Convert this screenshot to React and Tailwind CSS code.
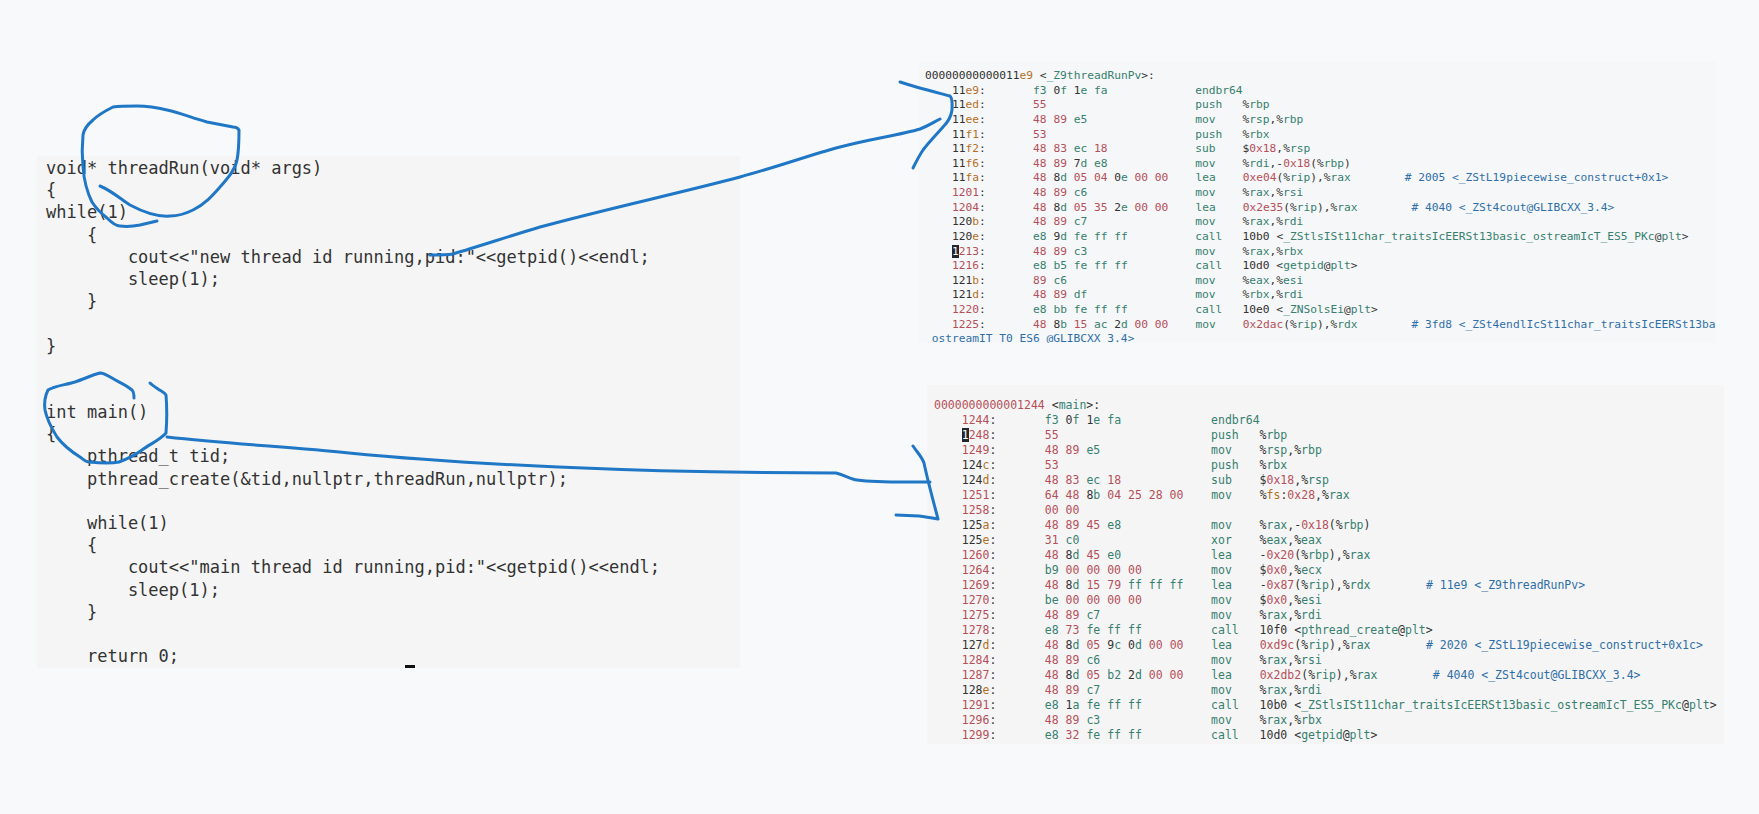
import React from 'react'

const RED = 'text-[#b5505a]'
const GREEN = 'text-[#35806f]'
const DARK = 'text-[#333333]'
const ORANGE = 'text-[#b5701f]'
const BLUE = 'text-[#2f6fa8]'

const sourceLines = [
    'void* threadRun(void* args)',
    '{',
    'while(1)',
    '    {',
    '        cout<<"new thread id running,pid:"<<getpid()<<endl;',
    '        sleep(1);',
    '    }',
    '',
    '}',
    '',
    '',
    'int main()',
    '{',
    '    pthread_t tid;',
    '    pthread_create(&tid,nullptr,threadRun,nullptr);',
    '',
    '    while(1)',
    '    {',
    '        cout<<"main thread id running,pid:"<<getpid()<<endl;',
    '        sleep(1);',
    '    }',
    '',
    '    return 0;',
]

const threadRunLines = [
    ['11e9', 'f3 0f 1e fa', 'endbr64'],
    ['11ed', '55', 'push', '%rbp'],
    ['11ee', '48 89 e5', 'mov', '%rsp,%rbp'],
    ['11f1', '53', 'push', '%rbx'],
    ['11f2', '48 83 ec 18', 'sub', '$0x18,%rsp'],
    ['11f6', '48 89 7d e8', 'mov', '%rdi,-0x18(%rbp)'],
    ['11fa', '48 8d 05 04 0e 00 00', 'lea', '0xe04(%rip),%rax', '# 2005 <_ZStL19piecewise_construct+0x1>'],
    ['1201', '48 89 c6', 'mov', '%rax,%rsi'],
    ['1204', '48 8d 05 35 2e 00 00', 'lea', '0x2e35(%rip),%rax', '# 4040 <_ZSt4cout@GLIBCXX_3.4>'],
    ['120b', '48 89 c7', 'mov', '%rax,%rdi'],
    ['120e', 'e8 9d fe ff ff', 'call', '10b0 <_ZStlsISt11char_traitsIcEERSt13basic_ostreamIcT_ES5_PKc@plt>'],
    ['1213', '48 89 c3', 'mov', '%rax,%rbx', null, true],
    ['1216', 'e8 b5 fe ff ff', 'call', '10d0 <getpid@plt>'],
    ['121b', '89 c6', 'mov', '%eax,%esi'],
    ['121d', '48 89 df', 'mov', '%rbx,%rdi'],
    ['1220', 'e8 bb fe ff ff', 'call', '10e0 <_ZNSolsEi@plt>'],
    ['1225', '48 8b 15 ac 2d 00 00', 'mov', '0x2dac(%rip),%rdx', '# 3fd8 <_ZSt4endlIcSt11char_traitsIcEERSt13basic_'],
]

const mainLines = [
    ['1244', 'f3 0f 1e fa', 'endbr64'],
    ['1248', '55', 'push', '%rbp', null, true],
    ['1249', '48 89 e5', 'mov', '%rsp,%rbp'],
    ['124c', '53', 'push', '%rbx'],
    ['124d', '48 83 ec 18', 'sub', '$0x18,%rsp'],
    ['1251', '64 48 8b 04 25 28 00', 'mov', '%fs:0x28,%rax'],
    ['1258', '00 00'],
    ['125a', '48 89 45 e8', 'mov', '%rax,-0x18(%rbp)'],
    ['125e', '31 c0', 'xor', '%eax,%eax'],
    ['1260', '48 8d 45 e0', 'lea', '-0x20(%rbp),%rax'],
    ['1264', 'b9 00 00 00 00', 'mov', '$0x0,%ecx'],
    ['1269', '48 8d 15 79 ff ff ff', 'lea', '-0x87(%rip),%rdx', '# 11e9 <_Z9threadRunPv>'],
    ['1270', 'be 00 00 00 00', 'mov', '$0x0,%esi'],
    ['1275', '48 89 c7', 'mov', '%rax,%rdi'],
    ['1278', 'e8 73 fe ff ff', 'call', '10f0 <pthread_create@plt>'],
    ['127d', '48 8d 05 9c 0d 00 00', 'lea', '0xd9c(%rip),%rax', '# 2020 <_ZStL19piecewise_construct+0x1c>'],
    ['1284', '48 89 c6', 'mov', '%rax,%rsi'],
    ['1287', '48 8d 05 b2 2d 00 00', 'lea', '0x2db2(%rip),%rax', '# 4040 <_ZSt4cout@GLIBCXX_3.4>'],
    ['128e', '48 89 c7', 'mov', '%rax,%rdi'],
    ['1291', 'e8 1a fe ff ff', 'call', '10b0 <_ZStlsISt11char_traitsIcEERSt13basic_ostreamIcT_ES5_PKc@plt>'],
    ['1296', '48 89 c3', 'mov', '%rax,%rbx'],
    ['1299', 'e8 32 fe ff ff', 'call', '10d0 <getpid@plt>'],
]

// address: plain digits are red, otherwise digits dark and the hex tail orange
const Address = ({value, cursor}) => {
    if (/^\d+$/.test(value)) {
        if (cursor) {
            return (
                <>
                    <span className="bg-[#23262d] text-white">{value[0]}</span>
                    <span className={RED}>{value.slice(1)}</span>
                </>
            )
        }
        return <span className={RED}>{value}</span>
    }
    const digits = value.match(/^\d*/)[0]
    return (
        <>
            <span className={DARK}>{digits}</span>
            <span className={ORANGE}>{value.slice(digits.length)}</span>
        </>
    )
}

const Byte = ({value}) => {
    if (/^\d+$/.test(value)) return <span className={RED}>{value}</span>
    if (/^[a-f]/.test(value)) return <span className={GREEN}>{value}</span>
    return (
        <>
            <span className={DARK}>{value[0]}</span>
            <span className={GREEN}>{value[1]}</span>
        </>
    )
}

const Symbol = ({value}) => {
    const parts = value.split(/([<>@:])/)
    return parts.map((part, i) => (
        <span key={i} className={/^[<>@:]$/.test(part) ? DARK : GREEN}>{part}</span>
    ))
}

const Operands = ({value}) => {
    const parts = value.split(/(<.*>|0x[0-9a-f]+|%[a-z]+)/)
    return parts.map((part, i) => {
        if (part.startsWith('<')) return <Symbol key={i} value={part} />
        if (part.startsWith('0x')) return <span key={i} className={RED}>{part}</span>
        if (part.startsWith('%')) {
            return (
                <span key={i}>
                    <span className={DARK}>%</span>
                    <span className={part === '%fs' ? ORANGE : GREEN}>{part.slice(1)}</span>
                </span>
            )
        }
        return <span key={i} className={DARK}>{part}</span>
    })
}

const AsmLine = ({line}) => {
    const [addr, bytes = '', mnemonic = '', operands = '', comment, cursor] = line
    const byteList = bytes.split(' ')
    return (
        <div className="whitespace-pre">
            {'    '}
            <Address value={addr} cursor={cursor} />
            <span className={DARK}>{':'.padEnd(8)}</span>
            {byteList.map((b, i) => (
                <span key={i}><Byte value={b} />{i < byteList.length - 1 ? ' ' : ''}</span>
            ))}
            {' '.repeat(24 - bytes.length)}
            <span className={GREEN}>{mnemonic.padEnd(7)}</span>
            <Operands value={operands} />
            {comment && <span className={BLUE}>{'        ' + comment}</span>}
        </div>
    )
}

const App = () => {
    return (
        <div className="relative flex w-screen h-screen overflow-hidden bg-[#f8f9fb] font-['DejaVu_Sans_Mono',monospace]">
            <div className="mt-[156px] ml-[37px] w-[703px] h-[512px] shrink-0 overflow-hidden bg-[#f5f5f5] pl-[9px] pt-px text-[17px] leading-[22.2px] text-[#333333]">
                {sourceLines.map((line, i) => (
                    <div key={i} className="whitespace-pre h-[22.2px]">{line}</div>
                ))}
            </div>

            <div className="ml-[179px] pt-[61px] shrink-0">
                <div className="w-[797px] h-[282px] overflow-hidden bg-[#f6f7f8] pl-[6px] pt-2 text-[11.23px] leading-[14.63px]">
                    <div className="whitespace-pre">
                        <Address value="00000000000011e9" />
                        <span className={DARK}> </span>
                        <Symbol value="<_Z9threadRunPv>:" />
                    </div>
                    {threadRunLines.map(line => (
                        <AsmLine key={line[0]} line={line} />
                    ))}
                    <div className={`whitespace-pre ${BLUE}`}> ostreamIT_T0_ES6_@GLIBCXX_3.4&gt;</div>
                </div>

                <div className="mt-[42px] ml-2 w-[797px] h-[359px] overflow-hidden bg-[#f5f5f5] pl-[7px] pt-[13px] text-[11.5px] leading-[15px]">
                    <div className="whitespace-pre">
                        <Address value="0000000000001244" />
                        <span className={DARK}> </span>
                        <Symbol value="<main>:" />
                    </div>
                    {mainLines.map(line => (
                        <AsmLine key={line[0]} line={line} />
                    ))}
                </div>
            </div>

            {/* text cursor left in the screenshot */}
            <div className="absolute left-[405px] top-[665px] w-[10px] h-[3px] bg-[#111111]"></div>

            {/* hand drawn pen marks over the code */}
            <svg className="absolute inset-0 pointer-events-none" width="1759" height="814" fill="none" stroke="#1f77c6" strokeWidth="3" strokeLinecap="round" strokeLinejoin="round">
                <path d="M100 186 C112 191 122 200 130 205 C145 213 158 217 170 216 C180 216 187 213 193 210 C205 204 212 196 220 187 C228 178 235 170 237 160 C239 150 239 140 239 130 C238 128 236 127 233 127 L207 122 C190 117 180 113 167 110 C155 107 147 106 137 106 C127 106 120 106 113 107 C105 111 98 115 93 120 C87 125 84 129 83 135 C82 145 82 157 83 167 C84 180 87 192 92 202 C97 210 102 214 107 218 C112 223 116 226 120 226 C128 227 135 226 140 225 L157 221" />
                <path d="M430 255 C438 255 446 255 453 254 C480 246 510 236 540 227 C610 208 680 193 740 177 C780 166 810 155 840 147 C870 139 900 135 920 129 C928 126 934 122 940 119" />
                <path d="M900 82 C915 87 935 92 950 96 C953 99 952 104 952 110 C951 118 948 122 943 127 C936 135 929 142 923 150 C919 156 916 162 913 168" />
                <path d="M134 398 C134 394 134 392 132 390 C125 384 118 382 112 378 C107 375 103 373 100 373 C92 375 84 379 75 382 C65 385 54 386 48 390 C45 396 44 403 45 410 C47 420 52 429 57 437 C63 445 72 452 80 457 C84 460 86 462 89 462 C98 463 110 464 119 462 C127 459 134 456 142 450 C150 444 160 440 166 433 C167 420 167 407 166 395 C164 392 161 391 158 389 C155 387 152 385 150 383" />
                <path d="M167 437 C230 444 290 447 349 453 C420 460 490 464 558 467 C650 471 750 473 836 473 C845 475 850 479 857 480 C880 483 905 482 930 482" />
                <path d="M913 446 C917 452 922 457 924 463 C928 482 933 500 938 519 C932 518 926 517 919 516 L896 515" />
            </svg>
        </div>
    )
}

export default App
